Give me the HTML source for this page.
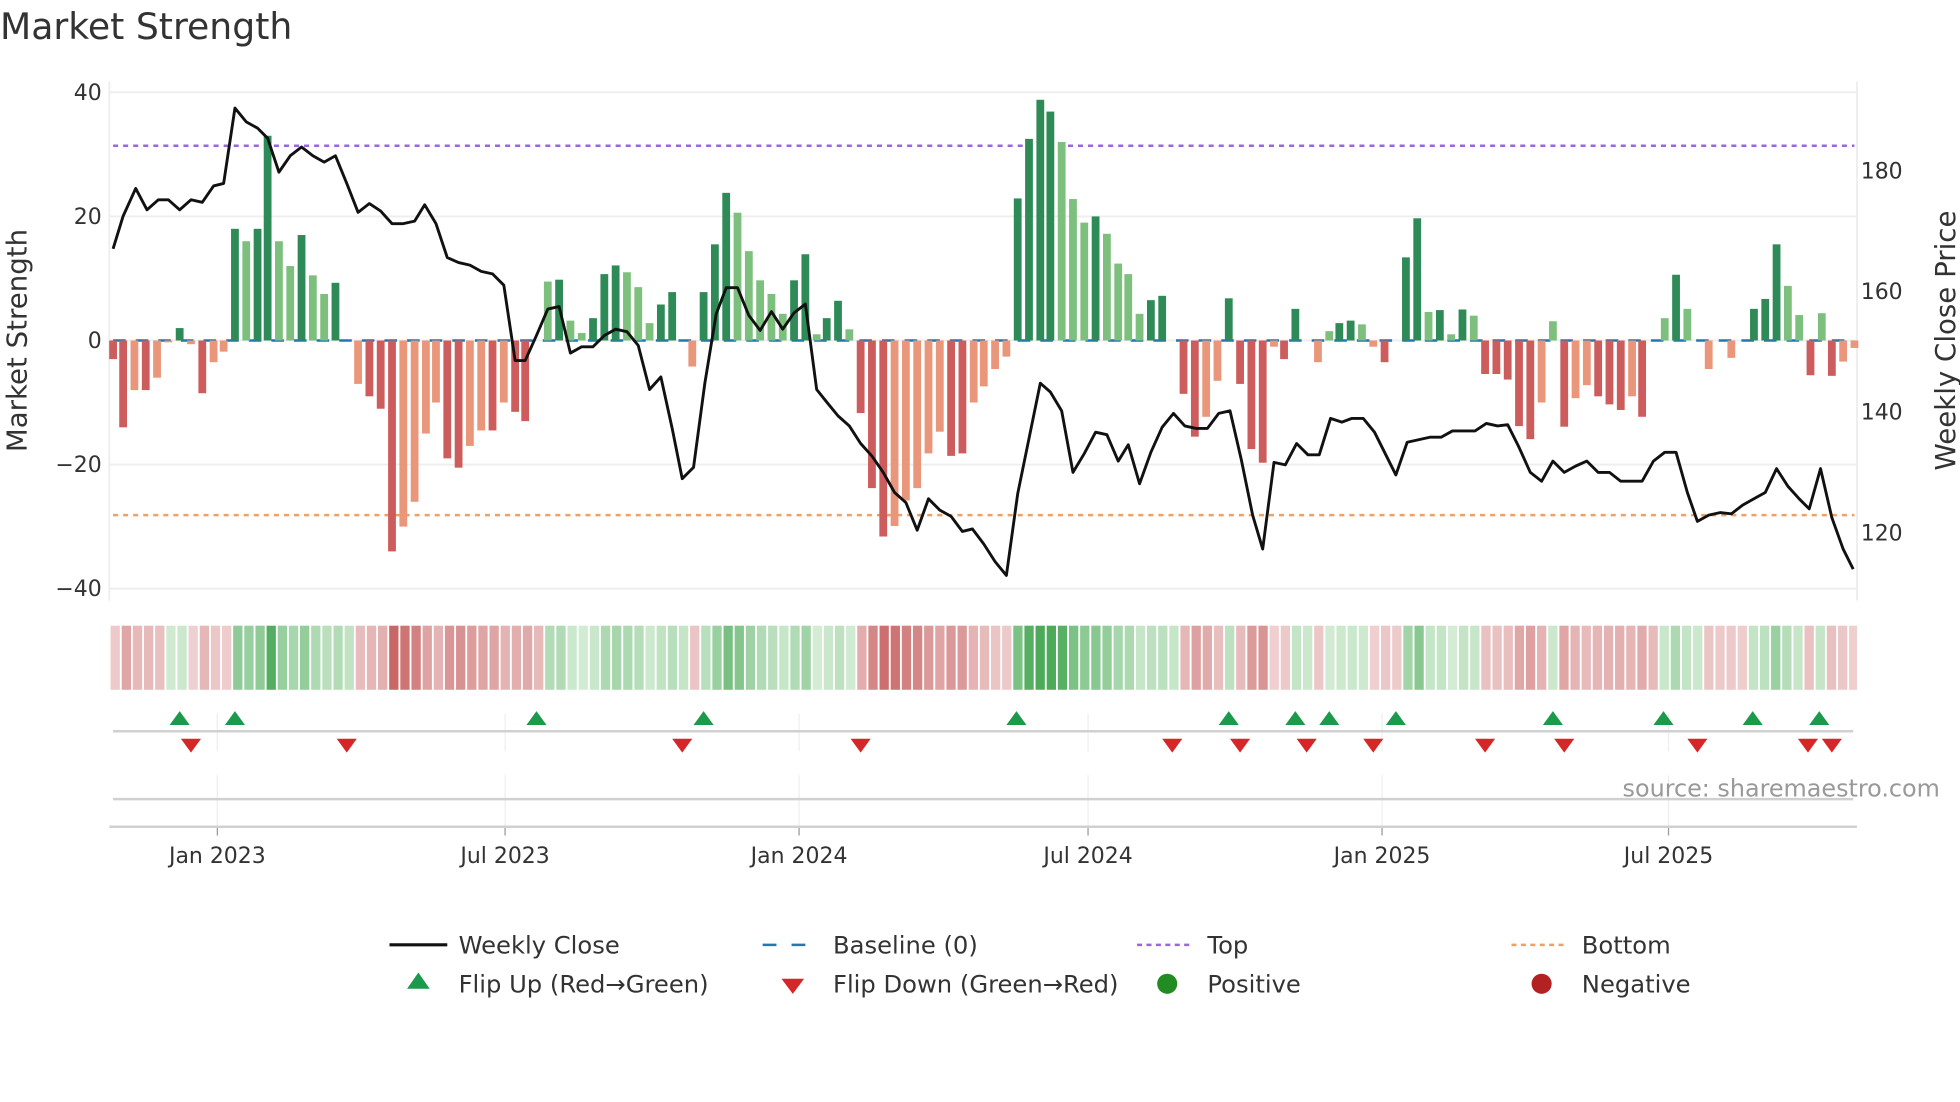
<!DOCTYPE html>
<html><head><meta charset="utf-8"><style>
html,body{margin:0;padding:0;background:#fff;width:1960px;height:1102px;overflow:hidden}
svg{display:block;font-family:"DejaVu Sans","Liberation Sans",sans-serif}
</style></head><body>
<svg id="s" width="1960" height="1102" viewBox="0 0 1560 877.1" preserveAspectRatio="none" xmlns="http://www.w3.org/2000/svg">
<rect width="1560" height="878" fill="#fff"/>
<text x="0" y="31" font-size="28.8" fill="#333">Market Strength</text>
<g id="g"></g>
</svg>
<script>
const NS="http://www.w3.org/2000/svg",G=document.getElementById('g');
function el(t,a,txt){const e=document.createElementNS(NS,t);for(const k in a)e.setAttribute(k,a[k]);if(txt!==undefined)e.textContent=txt;G.appendChild(e);return e;}
const y0=271,sc=(469-74)/80;const Y=v=>y0-v*sc;
[40,20,0,-20,-40].forEach(v=>{el('line',{x1:87,x2:1478,y1:Y(v),y2:Y(v),stroke:'#eeeeee','stroke-width':1.5});
el('text',{x:81,y:Y(v)+6,'font-size':17.5,'text-anchor':'end',fill:'#333'},v<0?'\u2212'+(-v):String(v));});
el('line',{x1:87,x2:87,y1:65,y2:478,stroke:'#eeeeee','stroke-width':1.5});
el('line',{x1:1478,x2:1478,y1:65,y2:478,stroke:'#eeeeee','stroke-width':1.5});
[[180,136],[160,232],[140,328],[120,424]].forEach(([v,y])=>el('text',{x:1481,y:y+6,'font-size':17.5,fill:'#333'},v));
el('text',{transform:'translate(21,271) rotate(-90)','font-size':22,'text-anchor':'middle',fill:'#333'},'Market Strength');
el('text',{transform:'translate(1556,271) rotate(-90)','font-size':22,'text-anchor':'middle',fill:'#333'},'Weekly Close Price');
el('line',{x1:90,x2:1476,y1:y0,y2:y0,stroke:'#1f77b4','stroke-width':2,'stroke-dasharray':'10 8'});
el('line',{x1:90,x2:1476,y1:116,y2:116,stroke:'#9966dd','stroke-width':2,'stroke-dasharray':'4 4'});
el('line',{x1:90,x2:1476,y1:410,y2:410,stroke:'#f0a060','stroke-width':2,'stroke-dasharray':'4 4'});
const B=[[90,-3],[98,-14],[107,-8],[116,-8],[125,-6],[134,-0.3],[143,2],[152,-0.6],[161,-8.5],[170,-3.5],[178,-1.8],
[187,18],[196,16],[205,18],[213,33],[222,16],[231,12],[240,17],[249,10.5],[258,7.5],[267,9.3],
[285,-7],[294,-9],[303,-11],[312,-34],[321,-30],[330,-26],[339,-15],[347,-10],[356,-19],[365,-20.5],[374,-17],[383,-14.5],[392,-14.5],[401,-10],[410,-11.5],[418,-13],
[436,9.5],[445,9.8],[454,3.2],[463,1.2],[472,3.6],[481,10.7],[490,12.1],[499,11],[508,8.6],[517,2.8],[526,5.8],[535,7.8],
[551,-4.2],[560,7.8],[569,15.5],[578,23.8],[587,20.6],[596,14.4],[605,9.7],[614,7.5],[623,4.3],[632,9.7],[641,13.9],[650,1],[658,3.6],[667,6.4],[676,1.8],
[685,-11.7],[694,-23.8],[703,-31.6],[712,-29.9],[721,-25.8],[730,-23.8],[739,-18.2],[748,-14.7],[757,-18.6],[766,-18.2],[775,-10],[783,-7.4],[792,-4.6],[801,-2.6],
[810,22.9],[819,32.5],[828,38.8],[836,36.9],[845,32],[854,22.8],[863,19],[872,20],[881,17.2],[890,12.4],[898,10.7],[907,4.3],[916,6.5],[925,7.2],
[942,-8.6],[951,-15.5],[960,-12.3],[969,-6.5],[978,6.8],[987,-7],[996,-17.5],[1005,-19.7],[1014,-1],[1022,-3],
[1031,5.1],[1049,-3.5],[1058,1.5],[1066,2.8],[1075,3.2],[1084,2.6],[1093,-1],[1102,-3.5],[1119,13.4],[1128,19.7],[1137,4.6],[1146,4.9],[1155,1],[1164,5],[1173,4],
[1182,-5.4],[1191,-5.4],[1200,-6.3],[1209,-13.8],[1218,-15.9],[1227,-10],[1236,3.1],[1245,-13.9],[1254,-9.3],[1263,-7.2],[1272,-9],[1281,-10.3],[1290,-11.2],[1299,-9],[1307,-12.3],
[1325,3.6],[1334,10.6],[1343,5.1],[1360,-4.6],[1378,-2.8],[1396,5.1],[1405,6.7],[1414,15.5],[1423,8.8],[1432,4.1],[1441,-5.6],[1450,4.4],[1458,-5.7],[1467,-3.4],[1476,-1.2]];
let prev=0;
B.forEach(([x,v])=>{const strong=Math.abs(v)>=Math.abs(prev)*0.95;prev=v;
const c=v>=0?(strong?'#2e8b57':'#7dc07d'):(strong?'#cd5c5c':'#e9967a');
const y=v>=0?Y(v):y0;el('rect',{x:x-3.1,y:y,width:6.2,height:Math.abs(v)*sc,fill:c});});
const P=[[90,198],[98,172],[108,150],[117,167],[126,159],[134,159],[143,167],[152,159],[161,161],[170,148],[178,146],[187,86],[196,97],[205,102],[213,110],[222,137],[231,124],[240,117],[249,124],[258,129],[267,124],[276,146],[285,169],[294,162],[303,168],[312,178],[321,178],[330,176],[338,163],[347,178],[356,205],[365,209],[374,211],[383,216],[392,218],[401,227],[410,287],[418,287],[427,267],[436,246],[445,244],[454,281],[463,276],[472,276],[481,267],[490,262],[499,264],[508,275],[517,310],[526,300],[535,341],[543,381],[552,372],[561,305],[570,250],[578,229],[587,229],[596,251],[605,263],[614,248],[623,262],[632,249],[641,242],[650,310],[658,320],[667,331],[676,339],[685,353],[694,363],[703,376],[712,392],[721,400],[730,422],[739,397],[748,406],[757,411],[766,423],[774,421],[783,433],[792,447],[801,458],[810,393],[819,349],[828,305],[836,312],[845,327],[854,376],[863,361],[872,344],[881,346],[890,367],[898,354],[907,385],[916,360],[925,340],[934,329],[943,339],[952,341],[961,341],[970,329],[979,327],[988,366],[997,410],[1005,437],[1014,368],[1023,370],[1032,353],[1041,362],[1050,362],[1059,333],[1068,336],[1076,333],[1085,333],[1094,344],[1103,362],[1111,378],[1120,352],[1129,350],[1138,348],[1147,348],[1156,343],[1165,343],[1174,343],[1183,337],[1192,339],[1200,338],[1209,356],[1218,376],[1227,383],[1236,367],[1245,376],[1254,371],[1263,367],[1272,376],[1281,376],[1290,383],[1298,383],[1307,383],[1316,367],[1325,360],[1334,360],[1343,392],[1351,415],[1360,410],[1369,408],[1378,409],[1387,402],[1396,397],[1405,392],[1414,373],[1423,387],[1432,397],[1440,405],[1449,373],[1458,412],[1467,437],[1475,453]];
el('polyline',{points:P.map(p=>p.join(',')).join(' '),fill:'none',stroke:'#111','stroke-width':2.3,'stroke-linejoin':'round'});
const map={};B.forEach(([x,v])=>map[Math.round((x-90)/8.89)]=v);
map[5]=2;map[6]=3;
let last=0;
for(let i=0;i<157;i++){let v=map[i];if(v===undefined)v=last*0.6;last=v;
const x=88+i*8.87;if(x>1476)break;const a=Math.min(Math.abs(v)/35,1);
let c;if(v>=0){const r=Math.round(215-(215-76)*a),g=Math.round(238-(238-170)*a),b=Math.round(215-(215-90)*a);c=`rgb(${r},${g},${b})`;}
else{const r=Math.round(240-(240-200)*a),g=Math.round(210-(210-100)*a),b=Math.round(210-(210-100)*a);c=`rgb(${r},${g},${b})`;}
el('rect',{x:x,y:498,width:Math.min(7.4,1478-x),height:51,fill:c});}
const ticks=[[173,'Jan 2023'],[402,'Jul 2023'],[636,'Jan 2024'],[866,'Jul 2024'],[1100,'Jan 2025'],[1328,'Jul 2025']];
ticks.forEach(([x,t])=>{el('line',{x1:x,x2:x,y1:568,y2:598,stroke:'#eceef2','stroke-width':1});
el('line',{x1:x,x2:x,y1:617,y2:658,stroke:'#eceef2','stroke-width':1});
el('line',{x1:x,x2:x,y1:658,y2:665,stroke:'#999','stroke-width':1});
el('text',{x:x,y:687,'font-size':17.5,'text-anchor':'middle',fill:'#333'},t);});
el('line',{x1:90,x2:1475,y1:582,y2:582,stroke:'#d0d0d0','stroke-width':2});
el('line',{x1:90,x2:1475,y1:636,y2:636,stroke:'#d0d0d0','stroke-width':2});
el('line',{x1:87,x2:1478,y1:658,y2:658,stroke:'#d0d0d0','stroke-width':2});
[143,187,427,560,809,978,1031,1058,1111,1236,1324,1395,1448].forEach(x=>el('path',{d:`M${x-8},577L${x+8},577L${x},566Z`,fill:'#1a9a4a'}));
[152,276,543,685,933,987,1040,1093,1182,1245,1351,1439,1458].forEach(x=>el('path',{d:`M${x-8},588L${x+8},588L${x},599Z`,fill:'#d62728'}));
el('text',{x:1544,y:634,'font-size':19,'text-anchor':'end',fill:'#999'},'source: sharemaestro.com');
const L=(x,y,t)=>el('text',{x:x,y:y+7,'font-size':19.3,fill:'#333'},t);
el('line',{x1:310,x2:356,y1:752,y2:752,stroke:'#111','stroke-width':2.5});L(365,752,'Weekly Close');
el('line',{x1:607,x2:653,y1:752,y2:752,stroke:'#1f77b4','stroke-width':2,'stroke-dasharray':'11 12'});L(663,752,'Baseline (0)');
el('line',{x1:905,x2:949,y1:752,y2:752,stroke:'#9966dd','stroke-width':2,'stroke-dasharray':'4 3.5'});L(961,752,'Top');
el('line',{x1:1203,x2:1247,y1:752,y2:752,stroke:'#f0a060','stroke-width':2,'stroke-dasharray':'4 3.5'});L(1259,752,'Bottom');
el('path',{d:'M324,787L342,787L333,774Z',fill:'#1a9a4a'});L(365,783,'Flip Up (Red\u2192Green)');
el('path',{d:'M622,779L640,779L631,791Z',fill:'#d62728'});L(663,783,'Flip Down (Green\u2192Red)');
el('circle',{cx:929,cy:783,r:8,fill:'#228b22'});L(961,783,'Positive');
el('circle',{cx:1227,cy:783,r:8,fill:'#b22222'});L(1259,783,'Negative');
</script>
</body></html>
